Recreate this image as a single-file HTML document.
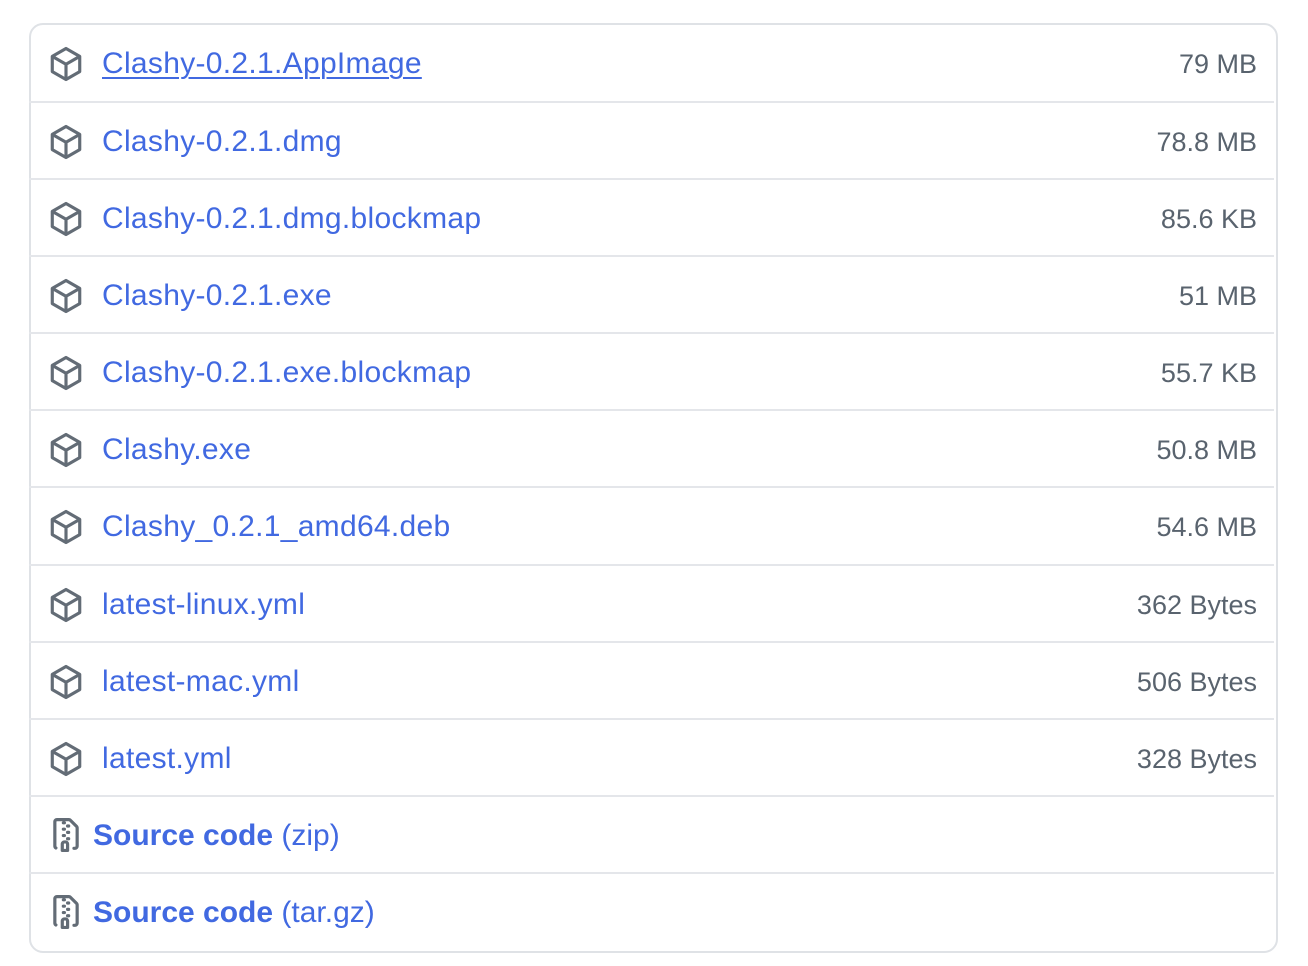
<!DOCTYPE html>
<html><head><meta charset="utf-8"><style>
body{margin:0;background:#fff;width:1308px;height:966px;overflow:hidden;font-family:"Liberation Sans",sans-serif;}
.box{position:absolute;left:29px;top:23px;width:1245px;height:926px;border:2px solid #dfe2e6;border-radius:14px;}
.row{position:absolute;left:0;width:1245px;height:77px;border-top:2px solid #e4e6ea;}
.ic{position:absolute;left:19px;top:21px;width:36px;height:36px}
.zip{left:20px;top:20px;width:34px;height:36px}
.n{position:absolute;left:73px;top:21px;font-size:30px;letter-spacing:0.3px;color:#4169e1;white-space:nowrap;line-height:36px}
.s{position:absolute;right:17px;top:22px;font-size:27px;color:#59636e;line-height:34px}
.u{text-decoration:underline;text-decoration-thickness:2px;text-underline-offset:4px}
.z{left:64px;letter-spacing:0}
</style></head><body>
<div class="box"></div>
<div style="position:absolute;left:29px;top:23px;">
<div class="row" style="top:0;border-top:2px solid transparent"><svg class="ic" viewBox="0 0 16 16" fill="none" stroke="#636c76" stroke-width="1.4" stroke-linejoin="round"><path d="M8 1.1 L14.1 4.6 V11.4 L8 14.9 L1.9 11.4 V4.6 Z M1.9 4.6 L8 8.1 L14.1 4.6 M8 8.1 V14.9"/></svg><div class="n u">Clashy-0.2.1.AppImage</div><div class="s">79 MB</div></div>
<div class="row" style="top:78px"><svg class="ic" viewBox="0 0 16 16" fill="none" stroke="#636c76" stroke-width="1.4" stroke-linejoin="round"><path d="M8 1.1 L14.1 4.6 V11.4 L8 14.9 L1.9 11.4 V4.6 Z M1.9 4.6 L8 8.1 L14.1 4.6 M8 8.1 V14.9"/></svg><div class="n">Clashy-0.2.1.dmg</div><div class="s">78.8 MB</div></div>
<div class="row" style="top:155px"><svg class="ic" viewBox="0 0 16 16" fill="none" stroke="#636c76" stroke-width="1.4" stroke-linejoin="round"><path d="M8 1.1 L14.1 4.6 V11.4 L8 14.9 L1.9 11.4 V4.6 Z M1.9 4.6 L8 8.1 L14.1 4.6 M8 8.1 V14.9"/></svg><div class="n">Clashy-0.2.1.dmg.blockmap</div><div class="s">85.6 KB</div></div>
<div class="row" style="top:232px"><svg class="ic" viewBox="0 0 16 16" fill="none" stroke="#636c76" stroke-width="1.4" stroke-linejoin="round"><path d="M8 1.1 L14.1 4.6 V11.4 L8 14.9 L1.9 11.4 V4.6 Z M1.9 4.6 L8 8.1 L14.1 4.6 M8 8.1 V14.9"/></svg><div class="n">Clashy-0.2.1.exe</div><div class="s">51 MB</div></div>
<div class="row" style="top:309px"><svg class="ic" viewBox="0 0 16 16" fill="none" stroke="#636c76" stroke-width="1.4" stroke-linejoin="round"><path d="M8 1.1 L14.1 4.6 V11.4 L8 14.9 L1.9 11.4 V4.6 Z M1.9 4.6 L8 8.1 L14.1 4.6 M8 8.1 V14.9"/></svg><div class="n">Clashy-0.2.1.exe.blockmap</div><div class="s">55.7 KB</div></div>
<div class="row" style="top:386px"><svg class="ic" viewBox="0 0 16 16" fill="none" stroke="#636c76" stroke-width="1.4" stroke-linejoin="round"><path d="M8 1.1 L14.1 4.6 V11.4 L8 14.9 L1.9 11.4 V4.6 Z M1.9 4.6 L8 8.1 L14.1 4.6 M8 8.1 V14.9"/></svg><div class="n">Clashy.exe</div><div class="s">50.8 MB</div></div>
<div class="row" style="top:463px"><svg class="ic" viewBox="0 0 16 16" fill="none" stroke="#636c76" stroke-width="1.4" stroke-linejoin="round"><path d="M8 1.1 L14.1 4.6 V11.4 L8 14.9 L1.9 11.4 V4.6 Z M1.9 4.6 L8 8.1 L14.1 4.6 M8 8.1 V14.9"/></svg><div class="n">Clashy_0.2.1_amd64.deb</div><div class="s">54.6 MB</div></div>
<div class="row" style="top:541px"><svg class="ic" viewBox="0 0 16 16" fill="none" stroke="#636c76" stroke-width="1.4" stroke-linejoin="round"><path d="M8 1.1 L14.1 4.6 V11.4 L8 14.9 L1.9 11.4 V4.6 Z M1.9 4.6 L8 8.1 L14.1 4.6 M8 8.1 V14.9"/></svg><div class="n">latest-linux.yml</div><div class="s">362 Bytes</div></div>
<div class="row" style="top:618px"><svg class="ic" viewBox="0 0 16 16" fill="none" stroke="#636c76" stroke-width="1.4" stroke-linejoin="round"><path d="M8 1.1 L14.1 4.6 V11.4 L8 14.9 L1.9 11.4 V4.6 Z M1.9 4.6 L8 8.1 L14.1 4.6 M8 8.1 V14.9"/></svg><div class="n">latest-mac.yml</div><div class="s">506 Bytes</div></div>
<div class="row" style="top:695px"><svg class="ic" viewBox="0 0 16 16" fill="none" stroke="#636c76" stroke-width="1.4" stroke-linejoin="round"><path d="M8 1.1 L14.1 4.6 V11.4 L8 14.9 L1.9 11.4 V4.6 Z M1.9 4.6 L8 8.1 L14.1 4.6 M8 8.1 V14.9"/></svg><div class="n">latest.yml</div><div class="s">328 Bytes</div></div>
<div class="row" style="top:772px"><svg class="ic zip" viewBox="0 0 16 16" fill="#636c76"><path d="M3.5 1.75v11.5c0 .09.048.173.126.217a.75.75 0 0 1-.752 1.298A1.748 1.748 0 0 1 2 13.25V1.75C2 .784 2.784 0 3.750 0h5.586c.464 0 .909.185 1.237.513l2.914 2.914c.329.328.513.773.513 1.237v8.586A1.75 1.75 0 0 1 12.25 15h-.5a.75.75 0 0 1 0-1.5h.5a.25.25 0 0 0 .25-.25V4.664a.25.25 0 0 0-.073-.177L9.513 1.573a.25.25 0 0 0-.177-.073H7.25a.75.75 0 0 1 0 1.5h-.5a.75.75 0 0 1 0-1.5h-3a.25.25 0 0 0-.25.25Zm3.750 8.75h.5c.966 0 1.750.784 1.750 1.75v3a.75.75 0 0 1-.75.75h-2.5a.75.75 0 0 1-.75-.75v-3c0-.966.784-1.75 1.750-1.750ZM6 5.25a.75.75 0 0 1 .75-.75h.5a.75.75 0 0 1 0 1.5h-.5A.75.75 0 0 1 6 5.25Zm.75 2.25h.5a.75.75 0 0 1 0 1.5h-.5a.75.75 0 0 1 0-1.5ZM8 6.75A.75.75 0 0 1 8.75 6h.5a.75.75 0 0 1 0 1.5h-.5A.75.75 0 0 1 8 6.75ZM8.75 3h.5a.75.75 0 0 1 0 1.5h-.5a.75.75 0 0 1 0-1.5ZM8 9.75A.75.75 0 0 1 8.75 9h.5a.75.75 0 0 1 0 1.5h-.5A.75.75 0 0 1 8 9.75Zm-1 2.5v2.25h1v-2.25a.25.25 0 0 0-.25-.25h-.5a.25.25 0 0 0-.25.25Z"/></svg><div class="n z"><b>Source code</b> <span>(zip)</span></div></div>
<div class="row" style="top:849px"><svg class="ic zip" viewBox="0 0 16 16" fill="#636c76"><path d="M3.5 1.75v11.5c0 .09.048.173.126.217a.75.75 0 0 1-.752 1.298A1.748 1.748 0 0 1 2 13.25V1.75C2 .784 2.784 0 3.750 0h5.586c.464 0 .909.185 1.237.513l2.914 2.914c.329.328.513.773.513 1.237v8.586A1.75 1.75 0 0 1 12.25 15h-.5a.75.75 0 0 1 0-1.5h.5a.25.25 0 0 0 .25-.25V4.664a.25.25 0 0 0-.073-.177L9.513 1.573a.25.25 0 0 0-.177-.073H7.25a.75.75 0 0 1 0 1.5h-.5a.75.75 0 0 1 0-1.5h-3a.25.25 0 0 0-.25.25Zm3.750 8.75h.5c.966 0 1.750.784 1.750 1.75v3a.75.75 0 0 1-.75.75h-2.5a.75.75 0 0 1-.75-.75v-3c0-.966.784-1.75 1.750-1.750ZM6 5.25a.75.75 0 0 1 .75-.75h.5a.75.75 0 0 1 0 1.5h-.5A.75.75 0 0 1 6 5.25Zm.75 2.25h.5a.75.75 0 0 1 0 1.5h-.5a.75.75 0 0 1 0-1.5ZM8 6.75A.75.75 0 0 1 8.75 6h.5a.75.75 0 0 1 0 1.5h-.5A.75.75 0 0 1 8 6.75ZM8.75 3h.5a.75.75 0 0 1 0 1.5h-.5a.75.75 0 0 1 0-1.5ZM8 9.75A.75.75 0 0 1 8.75 9h.5a.75.75 0 0 1 0 1.5h-.5A.75.75 0 0 1 8 9.75Zm-1 2.5v2.25h1v-2.25a.25.25 0 0 0-.25-.25h-.5a.25.25 0 0 0-.25.25Z"/></svg><div class="n z"><b>Source code</b> <span>(tar.gz)</span></div></div>
</div>
</body></html>
